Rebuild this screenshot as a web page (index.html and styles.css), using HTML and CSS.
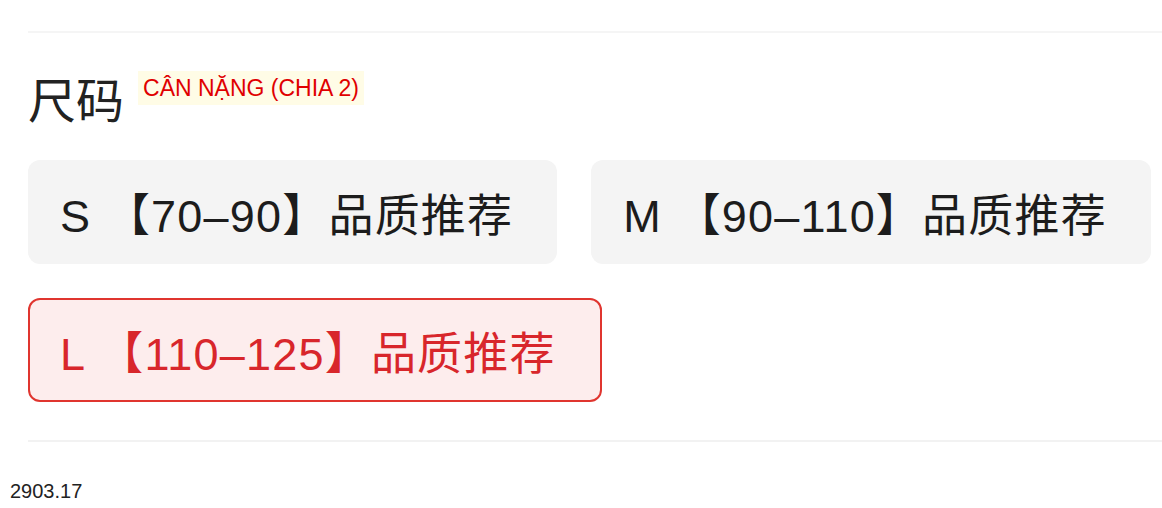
FILE: index.html
```html
<!DOCTYPE html>
<html lang="zh">
  <head>
    <meta charset="UTF-8" />
    <meta name="viewport" content="width=device-width, initial-scale=1.0" />
    <title>尺码</title>
    <link rel="stylesheet" href="styles.css">
  </head>
  <body>
    <div class="size-panel">
      <div class="size-head">
        <h2>尺码</h2>
        <span class="note">CÂN NẶNG (CHIA 2)</span>
      </div>
      <div class="size-list">
        <div class="size-chip">S 【70–90】品质推荐</div>
        <div class="size-chip">M 【90–110】品质推荐</div>
        <div class="size-chip active">L 【110–125】品质推荐</div>
      </div>
    </div>
    <div class="price">2903.17</div>
  </body>
</html>
```

FILE: styles.css
```css
body {
  margin: 0;
  background: #fff;
  font-family: "Noto Sans CJK SC", "Noto Sans", sans-serif;
  color: #1a1a1a;
}
.size-panel {
  margin: 31px 0 0 28px;
  border-top: 2px solid #f5f5f5;
  border-bottom: 2px solid #f2f2f2;
  padding-bottom: 38px;
}
.size-head {
  display: flex;
  align-items: flex-start;
  margin-top: 34px;
  height: 93px;
}
.size-head h2 {
  margin: 0;
  font-size: 48px;
  font-weight: 400;
  line-height: 60px;
  color: #222;
}
.note {
  margin: 4px 0 0 14px;
  padding: 0 5px;
  background: #fffce6;
  color: #e00000;
  font-family: "Liberation Sans", Arial, sans-serif;
  font-size: 23px;
  line-height: 34px;
}
.size-list {
  display: flex;
  flex-wrap: wrap;
  gap: 34px;
  width: 1134px;
}
.size-chip {
  height: 104px;
  box-sizing: border-box;
  padding: 0 44px 0 32px;
  display: flex;
  align-items: center;
  background: #f4f4f4;
  border-radius: 12px;
  font-family: "Liberation Sans", "Noto Sans CJK SC", sans-serif;
  font-size: 45px;
  letter-spacing: 1.2px;
  color: #1c1c1c;
}
.size-chip.active {
  background: #fdeded;
  border: 2px solid #e0352f;
  color: #d8262b;
  padding-left: 30px;
}
.price {
  margin: 38px 0 0 10px;
  font-family: "Liberation Sans", Arial, sans-serif;
  font-size: 20px;
  color: #222;
}
```
